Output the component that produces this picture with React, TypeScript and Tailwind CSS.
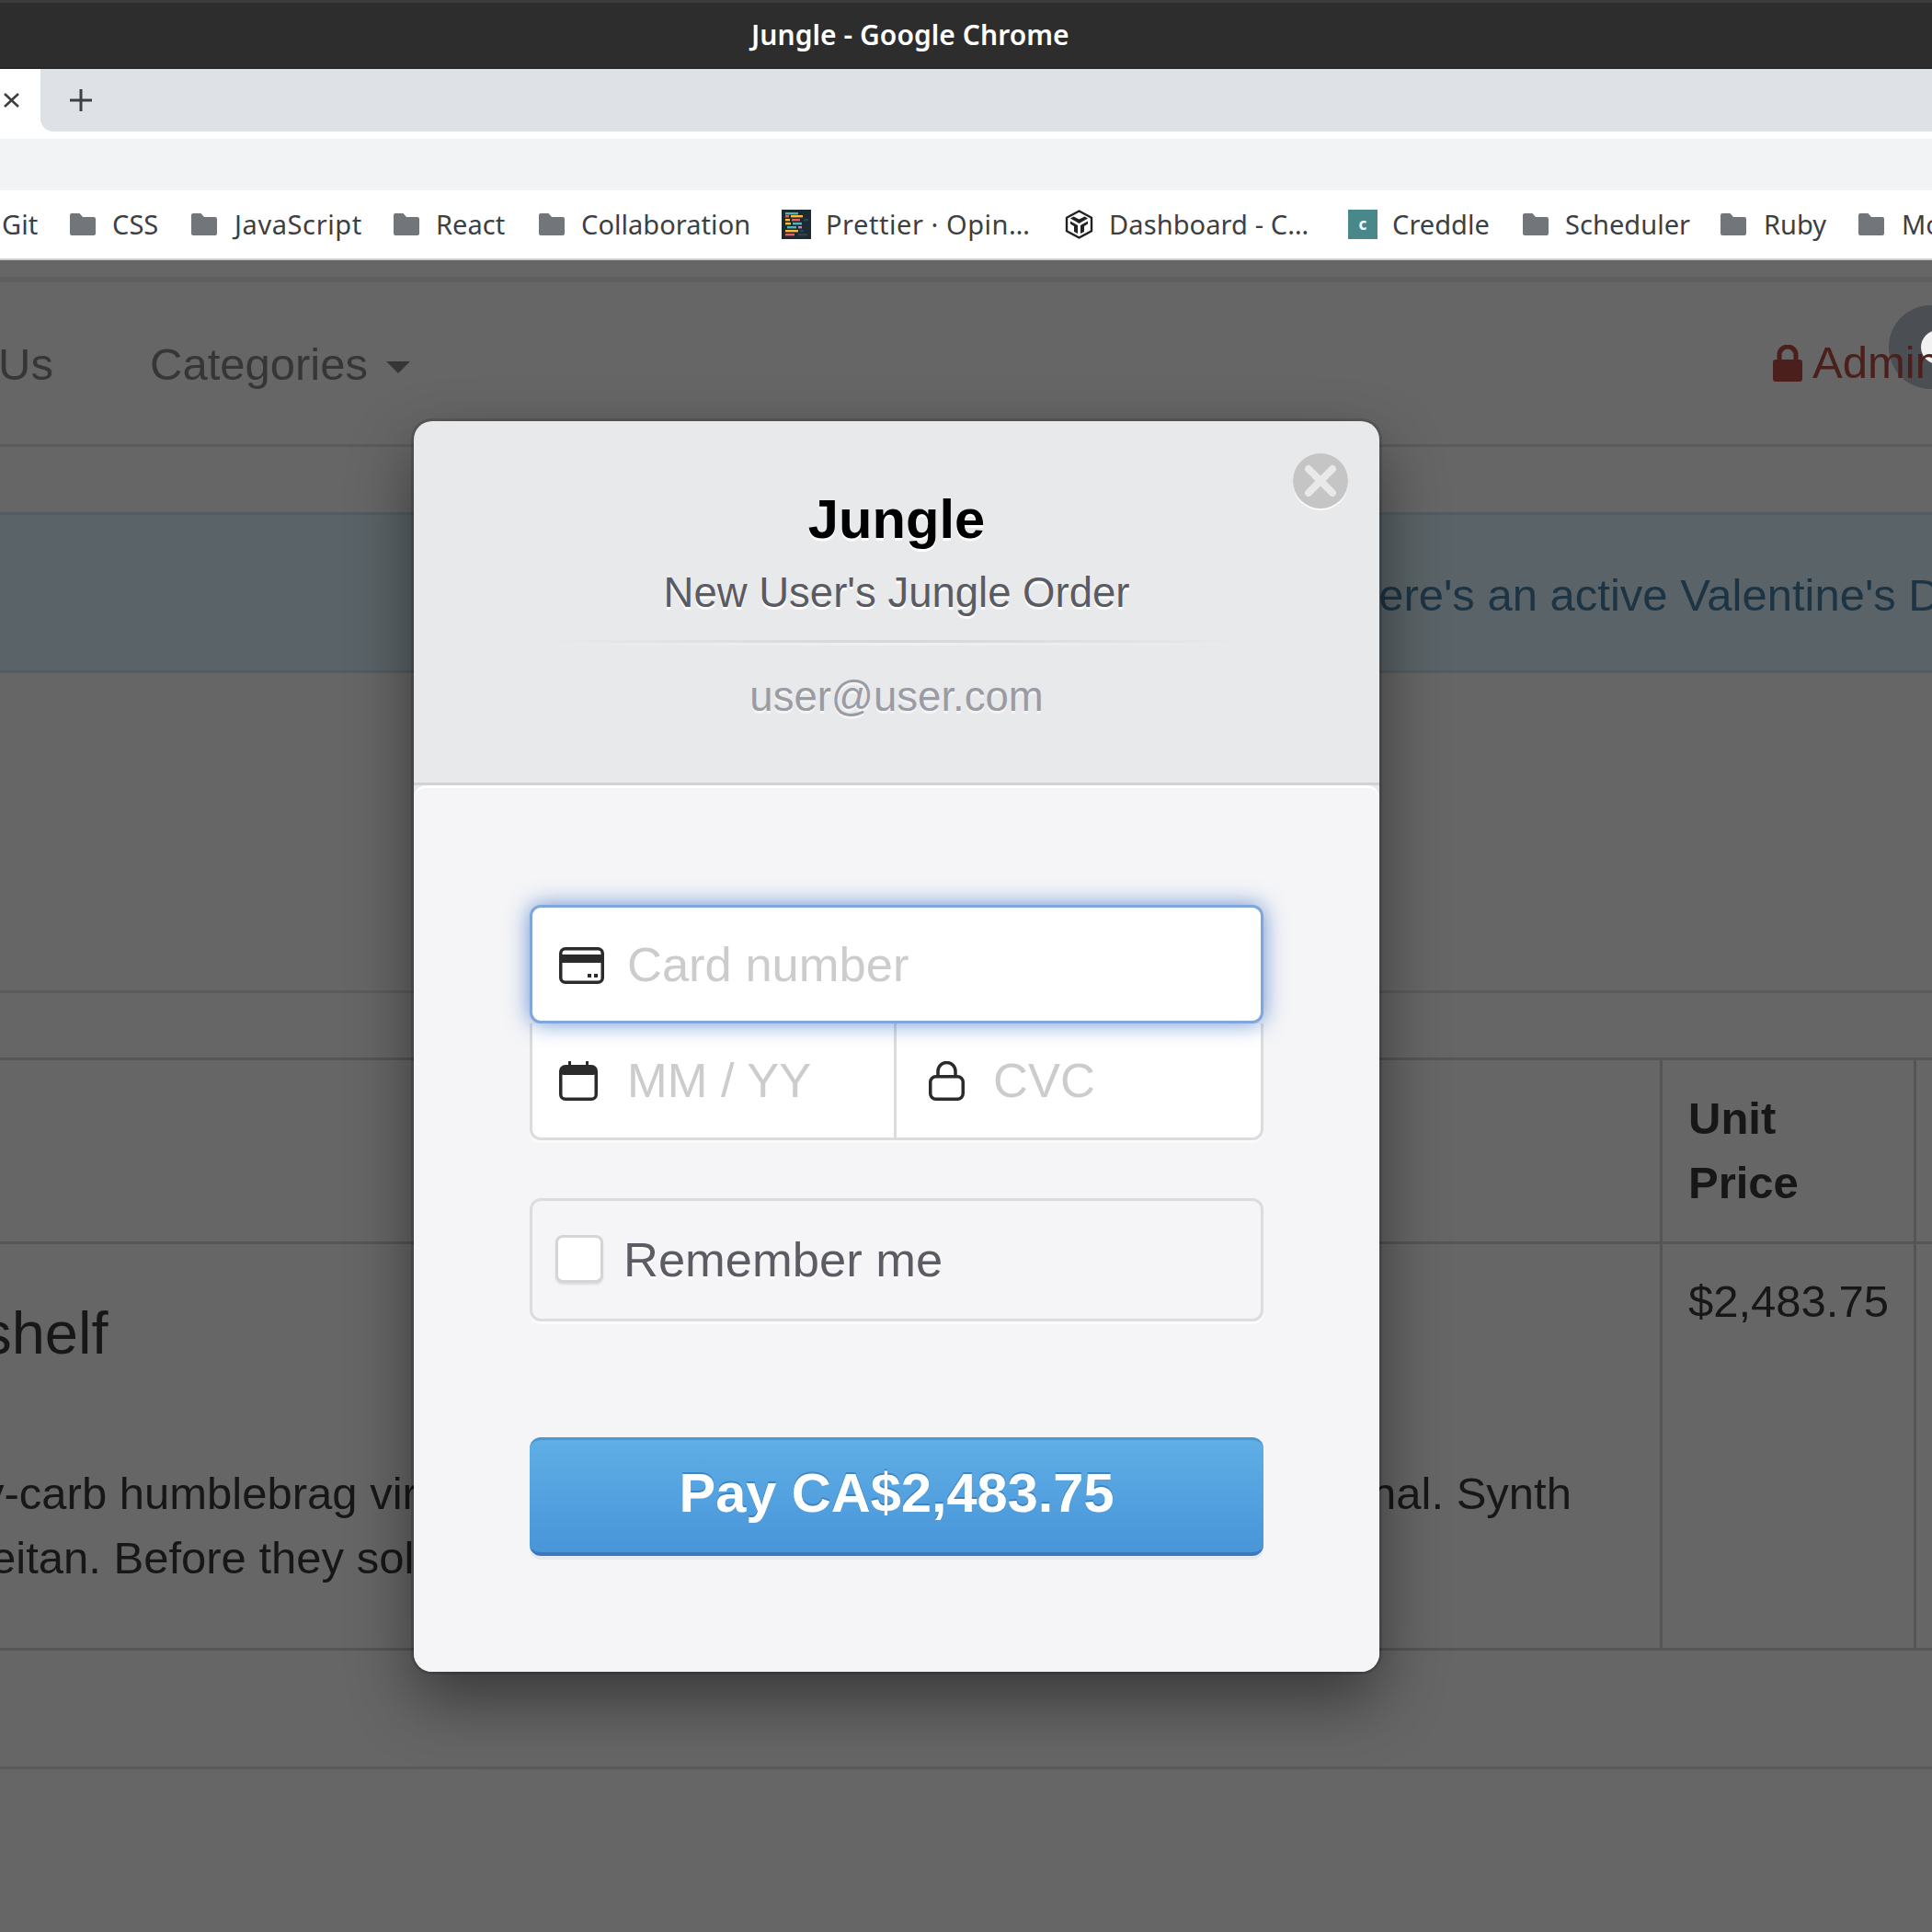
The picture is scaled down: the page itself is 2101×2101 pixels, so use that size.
import React from "react";

function Folder() {
  return (
    <svg width="28" height="24" viewBox="0 0 28 24" className="shrink-0">
      <path d="M2 0h8.5l3.5 4h12a2 2 0 0 1 2 2v16a2 2 0 0 1-2 2H2a2 2 0 0 1-2-2V2a2 2 0 0 1 2-2z" fill="#72767a" />
    </svg>
  );
}

function PrettierIcon() {
  const rows: [number, number, number, string][] = [
    [3, 4, 14, "#56b3b4"], [6, 4, 4, "#ea5e5e"], [6, 10, 13, "#f7ba3e"], [10, 4, 5, "#f7ba3e"], [10, 11, 9, "#ea5e5e"],
    [14, 4, 6, "#f7ba3e"], [14, 12, 10, "#56b3b4"], [18, 6, 10, "#56b3b4"], [18, 18, 4, "#bf85bf"], [22, 4, 14, "#f7ba3e"],
    [22, 20, 4, "#2e4350"], [26, 4, 10, "#ea5e5e"],
  ];
  return (
    <svg width="32" height="32" viewBox="0 0 32 32" className="shrink-0">
      <rect width="32" height="32" fill="#1a2b34" />
      {rows.map((r, i) => (
        <rect key={i} x={r[1]} y={r[0]} width={r[2]} height="2.4" fill={r[3]} />
      ))}
      <rect x="24" y="10" width="5" height="2.4" fill="#2e4350" />
      <rect x="18" y="26" width="10" height="2.4" fill="#2e4350" />
    </svg>
  );
}

function CubeIcon() {
  return (
    <svg width="31" height="32" viewBox="0 0 31 32" className="shrink-0" fill="none">
      <path d="M15.5 1.5 29 8.7v14.6L15.5 30.5 2 23.3V8.7z" stroke="#222" strokeWidth="2.4" strokeLinejoin="round" />
      <path d="M6 9.5 15.5 15 25 9.5l-3.5-2-6 3-6-3z" fill="#222" />
      <path d="M6 12.5 14 17v9l-4-2v-6l-4-2.5zM25 12.5 17 17v9l4-2v-6l4-2.5z" fill="#222" />
    </svg>
  );
}

function Bookmark({ icon, label, w }: { icon: React.ReactNode; label: string; w: string }) {
  return (
    <div className="flex items-center shrink-0">
      {icon}
      <span className={`whitespace-nowrap ${w}`}>{label}</span>
    </div>
  );
}

function ChromeBars() {
  return (
    <div className="shrink-0 font-['Noto_Sans',sans-serif]">
      <div className="h-[75px] bg-[#2d2d2d] border-t-[3px] border-t-[#3c3c3c] border-b-[2px] border-b-[#272727] flex items-center pl-[817px]">
        <span className="text-white text-[30px] font-semibold tracking-[0.05px] mb-[2px] whitespace-nowrap">Jungle - Google Chrome</span>
      </div>
      <div className="h-[68px] bg-white flex">
        <div className="w-[44px] bg-white flex items-center">
          <svg width="20" height="20" viewBox="0 0 20 20" className="ml-[3px]">
            <path d="M2 3 17 17M17 3 2 17" stroke="#3c4043" strokeWidth="2.6" />
          </svg>
        </div>
        <div className="flex-1 bg-[#dee1e6] rounded-bl-[14px] flex items-center">
          <svg width="26" height="26" viewBox="0 0 26 26" className="ml-[31px]">
            <path d="M13 1v24M1 13h24" stroke="#3c4043" strokeWidth="3" />
          </svg>
        </div>
      </div>
      <div className="h-[8px] bg-white" />
      <div className="h-[56px] bg-[#f1f3f4]" />
      <div className="h-[74px] bg-white flex items-center overflow-hidden text-[#3c4043] text-[29px] pl-[2px] tracking-[0.05px]">
        <span className="w-[74px] shrink-0">Git</span>
        <Bookmark icon={<Folder />} label="CSS" w="w-[86px] ml-[18px]" />
        <Bookmark icon={<Folder />} label="JavaScript" w="w-[173px] ml-[19px] tracking-[0.6px]" />
        <Bookmark icon={<Folder />} label="React" w="w-[112px] ml-[18px]" />
        <Bookmark icon={<Folder />} label="Collaboration" w="w-[218px] ml-[18px]" />
        <Bookmark icon={<PrettierIcon />} label="Prettier · Opin…" w="w-[260px] ml-[16px] tracking-[0.55px]" />
        <Bookmark icon={<CubeIcon />} label="Dashboard - C…" w="w-[260px] ml-[17px] tracking-[0.1px]" />
        <Bookmark
          icon={
            <div className="w-[32px] h-[32px] bg-[#48888a] flex items-center justify-center text-white text-[17px] font-bold shrink-0">c</div>
          }
          label="Creddle"
          w="w-[142px] ml-[16px]"
        />
        <Bookmark icon={<Folder />} label="Scheduler" w="w-[169px] ml-[18px]" />
        <Bookmark icon={<Folder />} label="Ruby" w="w-[103px] ml-[19px]" />
        <Bookmark icon={<Folder />} label="More" w="w-[80px] ml-[19px]" />
      </div>
      <div className="h-[2px] bg-[#cfcfcf]" />
    </div>
  );
}

function Page() {
  return (
    <div className="flex-1 flex flex-col bg-[#666666] font-['Liberation_Sans',sans-serif] text-[#171717] overflow-hidden">
      <div className="h-[18px] shrink-0" />
      <div className="h-[6px] shrink-0 bg-[#5f5f5f]" />
      {/* navbar */}
      <div className="h-[179px] shrink-0 border-b-[3px] border-[#5b5b5b] flex items-center pt-[3px] text-[49px] text-[#363636]">
        <span className="w-[164px] shrink-0 -ml-[2px]">Us</span>
        <span className="shrink-0 ml-[1px]">Categories</span>
        <span className="ml-[20px] shrink-0 w-0 h-0 border-x-[13px] border-x-transparent border-t-[13px] border-t-[#363636] mt-[6px]" />
        <div className="ml-auto flex items-center text-[#4a1f1c] w-[173px] shrink-0 overflow-hidden relative z-10 mb-[3px]">
          <svg width="32" height="40" viewBox="0 0 32 40" className="shrink-0">
            <path d="M7 17v-6a9 9 0 0 1 18 0v6" fill="none" stroke="#4a1f1c" strokeWidth="5" />
            <rect x="0" y="16" width="32" height="24" rx="3" fill="#4a1f1c" />
          </svg>
          <span className="ml-[11px] whitespace-nowrap">Admin</span>
        </div>
      </div>
      <div className="h-[71px] shrink-0" />
      {/* alert */}
      <div className="h-[175px] shrink-0 bg-[#5a6367] border-y-[3px] border-[#4f5e62] flex items-center pt-[6px] text-[49px] text-[#1d3444]">
        <span className="whitespace-nowrap ml-[1442px] shrink-0">There's an active Valentine's Day sale</span>
      </div>
      <div className="h-[348px] shrink-0 border-b-[3px] border-[#5c5c5c]" />
      <div className="h-[73px] shrink-0 border-b-[3px] border-[#555555]" />
      {/* table header */}
      <div className="h-[200px] shrink-0 border-b-[3px] border-[#555555] flex">
        <div className="w-[1805px] shrink-0" />
        <div className="w-[279px] shrink-0 border-x-[3px] border-[#555555] pl-[28px] pt-[28px] text-[49px] leading-[70px] font-bold">
          Unit
          <br />
          Price
        </div>
      </div>
      {/* table row */}
      <div className="h-[442px] shrink-0 border-b-[3px] border-[#555555] flex">
        <div className="w-[1805px] shrink-0 overflow-hidden">
          <div className="text-[65px] leading-[80px] mt-[57px] -ml-[168px] whitespace-nowrap">Bookshelf</div>
          <div className="mt-[99px] text-[49px] leading-[70px] flex justify-between whitespace-nowrap pr-[96px]">
            <span className="-ml-[20px]">y-carb humblebrag viral</span>
            <span>artisanal. Synth</span>
          </div>
          <div className="text-[49px] leading-[70px] whitespace-nowrap -ml-[10px]">eitan. Before they sold out</div>
        </div>
        <div className="w-[279px] shrink-0 border-x-[3px] border-[#555555] pl-[28px] pt-[27px] text-[49px] leading-[70px]">$2,483.75</div>
      </div>
      <div className="h-[129px] shrink-0 border-b-[3px] border-[#5a5a5a]" />
    </div>
  );
}

function CardIcon() {
  return (
    <svg width="49" height="40" viewBox="0 0 49 40" fill="none" className="shrink-0 mt-[2px]">
      <rect x="1.75" y="1.75" width="45.5" height="36.5" rx="5" stroke="#2b2b2b" strokeWidth="3.5" />
      <rect x="2" y="8" width="45" height="9" fill="#2b2b2b" />
      <rect x="31" y="29" width="4" height="4" fill="#2b2b2b" />
      <rect x="38" y="29" width="4" height="4" fill="#2b2b2b" />
    </svg>
  );
}

function CalendarIcon() {
  return (
    <svg width="42" height="43" viewBox="0 0 42 43" fill="none" className="shrink-0">
      <rect x="1.75" y="5.75" width="38.5" height="35.5" rx="5" stroke="#2b2b2b" strokeWidth="3.5" />
      <rect x="2" y="6" width="38" height="9" rx="3" fill="#2b2b2b" />
      <rect x="10" y="0" width="3" height="6" fill="#2b2b2b" />
      <rect x="29" y="0" width="3" height="6" fill="#2b2b2b" />
    </svg>
  );
}

function LockIcon() {
  return (
    <svg width="39" height="43" viewBox="0 0 39 43" fill="none" className="shrink-0">
      <path d="M10 18v-7a9.5 9.5 0 0 1 19 0v7" stroke="#2b2b2b" strokeWidth="3.5" />
      <rect x="1.75" y="16.75" width="35.5" height="24.5" rx="6" stroke="#2b2b2b" strokeWidth="3.5" />
    </svg>
  );
}

function Modal() {
  return (
    <div className="absolute left-[450px] top-[458px] w-[1050px] h-[1360px] rounded-[20px] bg-[#e8e9eb] shadow-[0_0_0_3px_rgba(0,0,0,0.12),0_30px_70px_rgba(0,0,0,0.45)] flex flex-col overflow-hidden font-['Liberation_Sans',sans-serif]">
      <div className="h-[396px] shrink-0 relative border-b-[3px] border-[#d1d2d4] flex flex-col items-center">
        <div className="absolute right-[34px] top-[35px] w-[60px] h-[60px] rounded-full bg-[#c5c5c6] shadow-[0_2px_0_rgba(255,255,255,0.8)] flex items-center justify-center">
          <svg width="38" height="38" viewBox="0 0 38 38">
            <path d="M6 6 32 32M32 6 6 32" stroke="#e9e9ea" strokeWidth="8" strokeLinecap="round" />
          </svg>
        </div>
        <div className="mt-[72px] h-[70px] leading-[70px] text-[59.7px] font-bold text-black [text-shadow:0_3px_0_#ffffff]">Jungle</div>
        <div className="mt-[15px] h-[60px] leading-[60px] text-[45.5px] text-[#5a5b63] [text-shadow:0_3px_0_#ffffff]">New User's Jungle Order</div>
        <div className="mt-[21px] w-[760px] h-[3px] bg-gradient-to-r from-transparent via-[#d5d6d8] to-transparent" />
        <div className="w-[760px] h-[3px] bg-gradient-to-r from-transparent via-[#f0f0f2] to-transparent" />
        <div className="mt-[26px] h-[60px] leading-[60px] text-[45.5px] text-[#9a9ba3] [text-shadow:0_3px_0_#f4f4f5]">user@user.com</div>
      </div>
      <div className="flex-1 bg-[#f5f5f7] border-t-[3px] border-white rounded-t-[14px] px-[126px] pt-[127px] flex flex-col">
        <div className="rounded-[12px] shadow-[0_3px_0_#fbfbfc]">
          <div className="relative z-10 h-[129px] bg-white rounded-[12px] border-[3px] border-[#7fa7db] shadow-[0_0_24px_rgba(70,120,200,0.8)] flex items-center pl-[29px]">
            <CardIcon />
            <span className="ml-[25px] mt-[2px] text-[52.5px] text-[#cccccc]">Card number</span>
          </div>
          <div className="h-[127px] bg-white rounded-b-[12px] border-x-[3px] border-b-[3px] border-[#dcdcdd] flex">
            <div className="w-[396px] shrink-0 border-r-[3px] border-[#dcdcdd] flex items-center pl-[29px]">
              <CalendarIcon />
              <span className="ml-[32px] text-[52.5px] text-[#cccccc]">MM / YY</span>
            </div>
            <div className="flex-1 flex items-center pl-[35px]">
              <LockIcon />
              <span className="ml-[31px] text-[52.5px] text-[#cccccc]">CVC</span>
            </div>
          </div>
        </div>
        <div className="mt-[63px] h-[134px] rounded-[12px] border-[3px] border-[#dcdcdd] shadow-[0_3px_0_#fbfbfc] flex items-center pl-[25px]">
          <div className="w-[52px] h-[52px] mb-[3px] rounded-[8px] bg-white border-[3px] border-[#d5d5d6] shadow-[0_2px_2px_rgba(0,0,0,0.1)] shrink-0" />
          <span className="ml-[22px] text-[52.5px] text-[#5c5d64] [text-shadow:0_3px_0_#ffffff]">Remember me</span>
        </div>
        <div className="mt-[126px] h-[129px] rounded-[12px] bg-gradient-to-b from-[#5faee6] to-[#4895d8] border-t-[3px] border-t-[#4b96d4] border-b-[4px] border-b-[#3d77bd] shadow-[0_4px_0_#e6eaf2] flex items-center justify-center">
          <span className="text-[59.5px] font-bold text-white [text-shadow:0_-2px_0_rgba(40,90,150,0.45)] mb-[6px]">Pay CA$2,483.75</span>
        </div>
      </div>
    </div>
  );
}

export default function App() {
  return (
    <div className="relative w-[2101px] h-[2101px] overflow-hidden flex flex-col bg-[#666666]">
      <ChromeBars />
      <Page />
      {/* floating extension bubble */}
      <div className="absolute left-[2054px] top-[332px] w-[91px] h-[91px] rounded-full bg-[#4b4e52] flex items-center">
        <div className="ml-[35px] w-[37px] h-[37px] rounded-full bg-[#f1f1f1]" />
      </div>
      <Modal />
    </div>
  );
}
